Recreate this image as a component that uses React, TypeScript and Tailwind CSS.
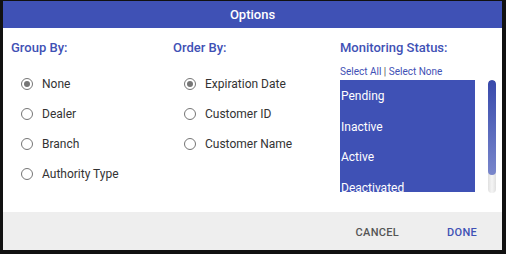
import React from "react";

const groupBy = ["None", "Dealer", "Branch", "Authority Type"];
const orderBy = ["Expiration Date", "Customer ID", "Customer Name"];
const statuses = ["Pending", "Inactive", "Active", "Deactivated"];

function Radio({ label, checked }: { label: string; checked?: boolean }) {
  return (
    <label className="flex h-[30px] items-center gap-[9px]">
      <span className="flex size-[12px] items-center justify-center rounded-full border border-[#757575]">
        {checked && <span className="size-[6px] rounded-full bg-[#757575]" />}
      </span>
      <span className="text-[12px] text-[#333]">{label}</span>
    </label>
  );
}

export default function App() {
  return (
    <div
      className="h-[254px] w-[506px] bg-[#111] pb-[4px] pl-[3px] pr-[4px] pt-[1px]"
      style={{ fontFamily: "Roboto, 'Liberation Sans', sans-serif" }}
    >
      <div className="flex h-full flex-col bg-white">
        <div className="flex h-[27px] items-center justify-center bg-[#3f51b5] text-[13px] font-medium text-white">
          Options
        </div>

        <div className="flex flex-1 pl-[8px] pt-[11px]">
          <div className="w-[162px]">
            <h3 className="text-[13px] font-medium leading-[18px] text-[#3f51b5]">Group By:</h3>
            <div className="mt-[12px] pl-[10px]">
              {groupBy.map((g, i) => (
                <Radio key={g} label={g} checked={i === 0} />
              ))}
            </div>
          </div>

          <div className="w-[167px]">
            <h3 className="text-[13px] font-medium leading-[18px] text-[#3f51b5]">Order By:</h3>
            <div className="mt-[12px] pl-[11px]">
              {orderBy.map((o, i) => (
                <Radio key={o} label={o} checked={i === 0} />
              ))}
            </div>
          </div>

          <div className="flex-1">
            <h3 className="text-[13px] font-medium leading-[18px] text-[#3f51b5]">Monitoring Status:</h3>
            <p className="mt-[9px] text-[10px] leading-[12px] text-[#3f51b5]">
              Select All <span className="text-[#555]">|</span> Select None
            </p>
            <div className="mt-[2px] flex">
              <ul className="h-[112px] w-[135px] overflow-hidden bg-[#3f51b5] pl-[1px] pt-px text-[12px] text-white">
                {statuses.map((s) => (
                  <li key={s} className="flex h-[30.5px] items-center">
                    {s}
                  </li>
                ))}
              </ul>
              <div className="ml-[13px] flex h-[113px] w-[8px] flex-col overflow-hidden rounded-full bg-gradient-to-r from-[#e0e0e0] via-[#f5f5f5] to-[#e0e0e0]">
                <div className="h-[95px] rounded-full bg-gradient-to-b from-[#3949ab] to-[#7986cb]" />
              </div>
            </div>
          </div>
        </div>

        <div className="flex h-[38px] items-center justify-end gap-[48px] bg-[#eeeeee] pr-[25px] pt-[5px] text-[11px] font-medium tracking-[0.3px]">
          <button className="text-[#555]">CANCEL</button>
          <button className="text-[#3f51b5]">DONE</button>
        </div>
      </div>
    </div>
  );
}
